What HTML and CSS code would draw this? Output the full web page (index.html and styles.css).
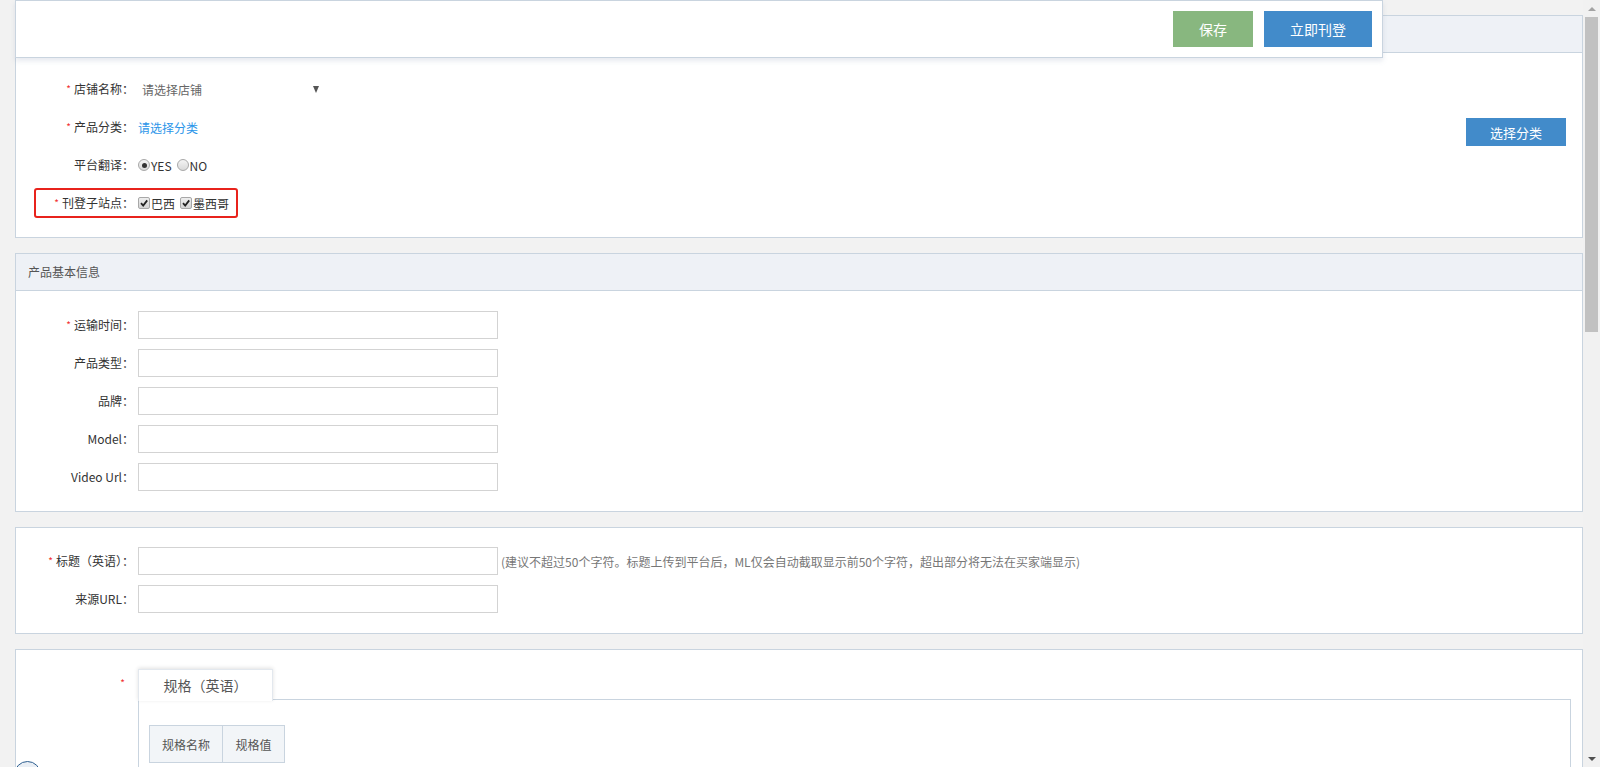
FILE: index.html
```html
<!DOCTYPE html>
<html lang="zh-CN">
<head>
<meta charset="utf-8">
<title>刊登</title>
<link rel="stylesheet" href="styles.css">
</head>
<body>
<div class="page">
  <div class="main">
    <div class="toolbar">
      <button class="btn btn-save">保存</button>
      <button class="btn btn-primary btn-publish">立即刊登</button>
    </div>

    <section class="panel panel-store">
      <div class="panel-head"></div>
      <div class="panel-body store-body">
        <div class="row">
          <label class="lbl"><i class="req">*</i>店铺名称：</label>
          <div class="select">请选择店铺<span class="caret"></span></div>
        </div>
        <div class="row">
          <label class="lbl"><i class="req">*</i>产品分类：</label>
          <a class="link">请选择分类</a>
          <button class="btn btn-primary btn-cat">选择分类</button>
        </div>
        <div class="row">
          <label class="lbl">平台翻译：</label>
          <span class="choice"><span class="radio checked"></span>YES</span>
          <span class="choice"><span class="radio"></span>NO</span>
        </div>
        <div class="row">
          <div class="highlight">
            <label class="lbl lbl-short"><i class="req">*</i>刊登子站点：</label>
            <span class="choice"><span class="checkbox"><svg viewBox="0 0 10 10"><path d="M2 5.2 L4.2 7.6 L8.2 2.4" fill="none" stroke="#222" stroke-width="1.8"/></svg></span>巴西</span>
            <span class="choice"><span class="checkbox"><svg viewBox="0 0 10 10"><path d="M2 5.2 L4.2 7.6 L8.2 2.4" fill="none" stroke="#222" stroke-width="1.8"/></svg></span>墨西哥</span>
          </div>
        </div>
      </div>
    </section>

    <section class="panel">
      <div class="panel-head">产品基本信息</div>
      <div class="panel-body form-body">
        <div class="frow"><label class="lbl"><i class="req">*</i>运输时间：</label><input class="inp" type="text"></div>
        <div class="frow"><label class="lbl">产品类型：</label><input class="inp" type="text"></div>
        <div class="frow"><label class="lbl">品牌：</label><input class="inp" type="text"></div>
        <div class="frow"><label class="lbl">Model：</label><input class="inp" type="text"></div>
        <div class="frow"><label class="lbl">Video Url：</label><input class="inp" type="text"></div>
      </div>
    </section>

    <section class="panel">
      <div class="panel-body form-body title-body">
        <div class="frow"><label class="lbl"><i class="req">*</i>标题（英语）：</label><input class="inp" type="text"><span class="hint">(建议不超过50个字符。标题上传到平台后，ML仅会自动截取显示前50个字符，超出部分将无法在买家端显示)</span></div>
        <div class="frow"><label class="lbl">来源URL：</label><input class="inp" type="text"></div>
      </div>
    </section>

    <section class="panel panel-spec">
      <div class="spec-row">
        <div class="lbl spec-lbl"><i class="req">*</i></div>
        <div class="tabs">
          <div class="tab-bar"><div class="tab">规格（英语）</div></div>
          <div class="tab-content">
            <table class="spec-table">
              <tr><td class="c1">规格名称</td><td class="c2">规格值</td></tr>
            </table>
          </div>
        </div>
      </div>
    </section>

    <div class="float-circle"></div>
  </div>

  <div class="scrollbar">
    <div class="sb-btn"><span class="tri-up"></span></div>
    <div class="sb-thumb"></div>
    <div class="sb-track"></div>
    <div class="sb-btn"><span class="tri-down"></span></div>
  </div>
</div>
</body>
</html>
```

FILE: styles.css
```css
* { box-sizing: border-box; }

html, body {
  margin: 0;
  height: 100%;
  overflow: hidden;
}

body {
  background: #f2f2f2;
  font-family: "Noto Sans CJK SC", "Noto Sans", sans-serif;
  font-size: 12px;
  color: #333;
}

.page {
  display: flex;
  height: 767px;
}

.main {
  flex: 1;
  position: relative;
  overflow: hidden;
  padding: 15px 0 0 15px;
  display: flex;
  flex-direction: column;
  gap: 15px;
}

/* floating toolbar */
.toolbar {
  position: absolute;
  top: 0;
  left: 15px;
  width: 1368px;
  height: 58px;
  background: #fff;
  border: 1px solid #c9d4df;
  box-shadow: 0 3px 5px rgba(120, 140, 170, 0.18);
  display: flex;
  justify-content: flex-end;
  align-items: flex-start;
  gap: 11px;
  padding: 10px 10px 0 0;
  z-index: 5;
}

.btn {
  border: none;
  color: #fff;
  font-family: inherit;
  cursor: pointer;
  padding: 0;
}

.btn-save {
  width: 80px;
  height: 36px;
  background: #88b77f;
  font-size: 14px;
}

.btn-primary {
  background: #428bca;
}

.btn-publish {
  width: 108px;
  height: 36px;
  font-size: 14px;
}

.btn-cat {
  width: 100px;
  height: 28px;
  font-size: 13px;
  margin-left: auto;
  margin-right: 16px;
  margin-top: 10px;
}

/* panels */
.panel {
  background: #fff;
  border: 1px solid #c9d4df;
  flex: none;
}

.panel-head {
  height: 37px;
  background: #eef1f6;
  border-bottom: 1px solid #c9d4df;
  padding-left: 12px;
  line-height: 36px;
  color: #555;
}

.store-body {
  padding: 17px 0 15px 0;
}

.row {
  display: flex;
  align-items: center;
  height: 38px;
}

.lbl {
  width: 118px;
  flex: none;
  text-align: right;
  color: #333;
  line-height: 16px;
  white-space: nowrap;
}

.req {
  font-style: normal;
  color: #f23030;
  font-size: 10px;
  margin-right: 3px;
  vertical-align: 1px;
}

.select {
  margin-left: 4px;
  width: 184px;
  padding-left: 4px;
  color: #666;
  display: flex;
  align-items: center;
  justify-content: space-between;
}

.caret {
  width: 0;
  height: 0;
  border-left: 3.5px solid transparent;
  border-right: 3.5px solid transparent;
  border-top: 7px solid #555;
  margin-right: 3px;
}

.link {
  margin-left: 4px;
  color: #2b95e9;
}

.choice {
  display: inline-flex;
  align-items: center;
  color: #333;
  margin-left: 5px;
}

.row > .lbl + .choice,
.highlight > .lbl + .choice {
  margin-left: 4px;
}

.radio {
  width: 12px;
  height: 12px;
  border-radius: 50%;
  border: 1px solid #a8a8a8;
  background: linear-gradient(#f4f4f4, #d9d9d9);
  margin-right: 1px;
  position: relative;
}

.radio.checked::after {
  content: "";
  position: absolute;
  left: 2.5px;
  top: 2.5px;
  width: 5px;
  height: 5px;
  border-radius: 50%;
  background: #333;
}

.checkbox {
  width: 12px;
  height: 12px;
  border: 1px solid #a8a8a8;
  border-radius: 2px;
  background: linear-gradient(#eee, #d4d4d4);
  margin-right: 1px;
  display: inline-flex;
}

.checkbox svg {
  width: 10px;
  height: 10px;
}

.highlight {
  margin-left: 18px;
  width: 204px;
  height: 30px;
  border: 2px solid #e8231c;
  border-radius: 3px;
  display: flex;
  align-items: center;
}

.lbl-short {
  width: 98px;
}

/* forms */
.form-body {
  padding: 20px 0 20px 0;
  display: flex;
  flex-direction: column;
  gap: 10px;
}

.title-body {
  padding-top: 19px;
}

.frow {
  display: flex;
  align-items: center;
  height: 28px;
}

.inp {
  margin-left: 4px;
  width: 360px;
  height: 28px;
  border: 1px solid #d3d3d3;
  background: #fff;
  font-family: inherit;
  outline: none;
}

.hint {
  margin-left: 3px;
  color: #777;
  white-space: nowrap;
}

/* spec */
.panel-spec {
  flex: 1;
  padding-top: 19px;
}

.spec-row {
  display: flex;
  align-items: flex-start;
}

.spec-lbl {
  padding: 6px 6px 0 0;
}

.tabs {
  margin-left: 4px;
  margin-right: 11px;
  flex: 1;
  display: flex;
  flex-direction: column;
}

.tab-bar {
  display: flex;
  height: 31px;
  position: relative;
  z-index: 1;
  margin-bottom: -1px;
}

.tab {
  width: 135px;
  height: 32px;
  background: #fff;
  border: 1px solid #e3e8ee;
  border-bottom: none;
  box-shadow: 0 -1px 4px rgba(0, 0, 0, 0.12);
  color: #555;
  font-size: 14px;
  text-align: center;
  line-height: 30px;
}

.tab-content {
  border: 1px solid #c9d4df;
  height: 200px;
  padding: 25px 0 0 10px;
}

.spec-table {
  border-collapse: collapse;
}

.spec-table td {
  height: 37px;
  border: 1px solid #c9d4df;
  background: #f2f5f8;
  color: #555;
  text-align: center;
  padding: 0;
}

.spec-table .c1 { width: 73px; }
.spec-table .c2 { width: 62px; }

.float-circle {
  position: absolute;
  left: 14px;
  top: 761px;
  width: 27px;
  height: 27px;
  border-radius: 50%;
  border: 1px solid #2f5f90;
  background: #e9eef4;
  z-index: 3;
}

/* scrollbar */
.scrollbar {
  width: 17px;
  flex: none;
  background: #f1f1f1;
  display: flex;
  flex-direction: column;
}

.sb-btn {
  height: 17px;
  display: flex;
  align-items: center;
  justify-content: center;
  flex: none;
}

.sb-thumb {
  height: 315px;
  margin: 0 2px;
  background: #c1c1c1;
  flex: none;
}

.sb-track {
  flex: 1;
}

.tri-up {
  width: 0;
  height: 0;
  border-left: 4px solid transparent;
  border-right: 4px solid transparent;
  border-bottom: 4px solid #a3a3a3;
}

.tri-down {
  width: 0;
  height: 0;
  border-left: 4px solid transparent;
  border-right: 4px solid transparent;
  border-top: 4px solid #505050;
}
```
